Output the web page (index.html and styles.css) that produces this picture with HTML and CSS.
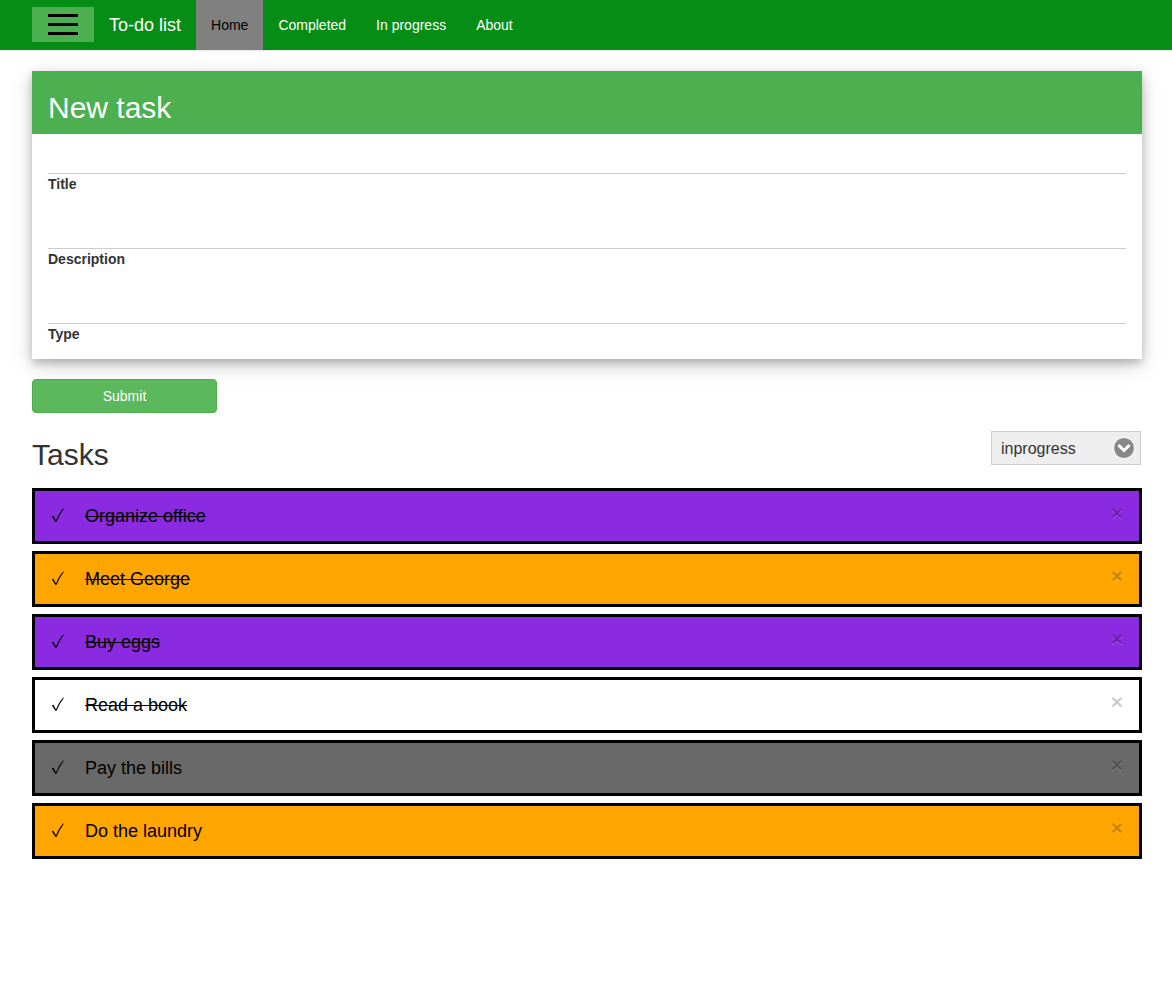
FILE: index.html
```html
<!DOCTYPE html>
<html lang="en">
<head>
  <meta charset="utf-8">
  <meta name="viewport" content="width=device-width, initial-scale=1">
  <title>To-do list</title>
  <link rel="stylesheet" href="styles.css">
</head>
<body>
  <svg class="symbols" aria-hidden="true">
    <symbol id="check" viewBox="0 0 14 16">
      <path d="M1.800 8.300 3.400 7.700 6 12.400Q9 4.800 13.200.400L13.900.700Q9.500 6.500 6.600 13.800H5.300Z" fill="currentColor"/>
    </symbol>
  </svg>
  <nav class="navbar">
    <button class="menu-button" type="button" aria-label="Menu">
      <span class="menu-bar"></span>
      <span class="menu-bar"></span>
      <span class="menu-bar"></span>
    </button>
    <a class="brand" href="#">To-do list</a>
    <a class="nav-link active" href="#">Home</a>
    <a class="nav-link" href="#">Completed</a>
    <a class="nav-link" href="#">In progress</a>
    <a class="nav-link" href="#">About</a>
  </nav>
  <main class="page">
    <form class="task-form">
      <section class="card">
        <header class="card-header"><h2 class="heading">New task</h2></header>
        <div class="fields">
          <div class="field"><input class="field-input" id="title" type="text"><label class="field-label" for="title">Title</label></div>
          <div class="field"><input class="field-input" id="description" type="text"><label class="field-label" for="description">Description</label></div>
          <div class="field"><input class="field-input" id="type" type="text"><label class="field-label" for="type">Type</label></div>
        </div>
      </section>
      <button class="submit" type="submit">Submit</button>
    </form>
    <div class="tasks-head">
      <h2 class="heading">Tasks</h2>
      <div class="filter">
        <select class="filter-select" aria-label="Filter tasks">
          <option>inprogress</option>
          <option>completed</option>
        </select>
        <svg class="filter-icon" viewBox="0 0 22 22" aria-hidden="true">
          <circle cx="11" cy="11" r="10.500" fill="#888" stroke="#fff"/>
          <path d="M5.500 8 11 13.500 16.500 8" fill="none" stroke="#fff" stroke-width="3"/>
        </svg>
      </div>
    </div>
    <ul class="tasks">
      <li class="task purple done">
        <button class="check" type="button" aria-label="Toggle Organize office"><svg class="check-icon"><use href="#check"/></svg></button>
        <span class="task-name">Organize office</span>
        <button class="close" type="button" aria-label="Delete Organize office">×</button>
      </li>
      <li class="task orange done">
        <button class="check" type="button" aria-label="Toggle Meet George"><svg class="check-icon"><use href="#check"/></svg></button>
        <span class="task-name">Meet George</span>
        <button class="close" type="button" aria-label="Delete Meet George">×</button>
      </li>
      <li class="task purple done">
        <button class="check" type="button" aria-label="Toggle Buy eggs"><svg class="check-icon"><use href="#check"/></svg></button>
        <span class="task-name">Buy eggs</span>
        <button class="close" type="button" aria-label="Delete Buy eggs">×</button>
      </li>
      <li class="task done">
        <button class="check" type="button" aria-label="Toggle Read a book"><svg class="check-icon"><use href="#check"/></svg></button>
        <span class="task-name">Read a book</span>
        <button class="close" type="button" aria-label="Delete Read a book">×</button>
      </li>
      <li class="task gray">
        <button class="check" type="button" aria-label="Toggle Pay the bills"><svg class="check-icon"><use href="#check"/></svg></button>
        <span class="task-name">Pay the bills</span>
        <button class="close" type="button" aria-label="Delete Pay the bills">×</button>
      </li>
      <li class="task orange">
        <button class="check" type="button" aria-label="Toggle Do the laundry"><svg class="check-icon"><use href="#check"/></svg></button>
        <span class="task-name">Do the laundry</span>
        <button class="close" type="button" aria-label="Delete Do the laundry">×</button>
      </li>
    </ul>
  </main>
</body>
</html>
```
FILE: styles.css
```css
*, *::before, *::after { box-sizing: border-box; }

body {
  margin: 0;
  background: #fff;
  color: #333;
  font: 14px/20px "Liberation Sans", Arial, sans-serif;
}

button, input, select { font: inherit; color: inherit; }
button { cursor: pointer; }

.symbols { display: none; }

.navbar {
  display: flex;
  align-items: flex-start;
  padding-left: 32px;
  background: #058d15;
  border-bottom: 1px solid #e7e7e7;
}

.menu-button {
  display: flex;
  flex-direction: column;
  gap: 6px;
  margin-top: 7px;
  padding: 7px 16px;
  border: 0;
  background: #4caf50;
}

.menu-bar { width: 30px; height: 3px; background: #000; }

.brand {
  padding: 15px;
  color: #fff;
  font-size: 18px;
  text-decoration: none;
}

.nav-link {
  padding: 15px;
  color: #fff;
  text-decoration: none;
}

.nav-link.active { background: #808080; color: #000; }

.page { padding: 20px 30px 20px 32px; }

.card {
  background: #fff;
  box-shadow: 0 4px 8px 0 rgba(0, 0, 0, .2), 0 6px 20px 0 rgba(0, 0, 0, .19);
}

.card-header {
  padding: 20px 16px 10px;
  background: #4caf50;
  color: #fff;
}

.heading {
  margin: 0;
  font-size: 30px;
  font-weight: 500;
  line-height: 33px;
}

.fields {
  display: flex;
  flex-direction: column;
  gap: 25px;
  padding: 10px 16px 15px;
}

.field { display: flex; flex-direction: column; }

.field-input {
  width: 100%;
  height: 30px;
  padding: 4px 8px;
  border: 0;
  border-bottom: 1px solid #ccc;
  background: none;
}

.field-label { font-weight: 700; }

.submit {
  width: calc(100% / 6);
  margin-top: 20px;
  padding: 6px 12px;
  border: 1px solid #4cae4c;
  border-radius: 4px;
  background: #5cb85c;
  color: #fff;
}

.tasks-head {
  display: flex;
  justify-content: space-between;
  align-items: flex-start;
  margin-top: 18px;
  padding-right: 1px;
}

.tasks-head .heading { padding-top: 7px; }

.filter { position: relative; }

.filter-select {
  display: block;
  width: 150px;
  height: 34px;
  padding: 6px 9px 4px;
  border: 1px solid #ccc;
  border-radius: 0;
  background: #eee;
  font-size: 16px;
  appearance: none;
}

.filter-icon {
  position: absolute;
  top: 6px;
  right: 6px;
  width: 22px;
  height: 22px;
  pointer-events: none;
}

.tasks {
  display: flex;
  flex-direction: column;
  gap: 7px;
  margin: 17px 0 0;
  padding: 0;
  list-style: none;
}

.task {
  display: flex;
  align-items: center;
  padding: 12px 16px 12px 15px;
  border: 3px solid #000;
  background: #fff;
  color: #000;
  font-size: 18px;
  line-height: 26px;
}

.task.purple { background: #8a2be2; }
.task.orange { background: #ffa500; }
.task.gray { background: #696969; }

.check {
  display: flex;
  width: 35px;
  padding: 0;
  border: 0;
  background: none;
}

.check-icon { width: 14px; height: 16px; }

.task-name { flex: 1; }
.done .task-name { text-decoration: line-through; }

.close {
  align-self: flex-start;
  padding: 0;
  border: 0;
  background: none;
  color: #000;
  font-size: 21px;
  font-weight: 700;
  line-height: 20px;
  text-shadow: 0 1px 0 #fff;
  opacity: .2;
}
```
